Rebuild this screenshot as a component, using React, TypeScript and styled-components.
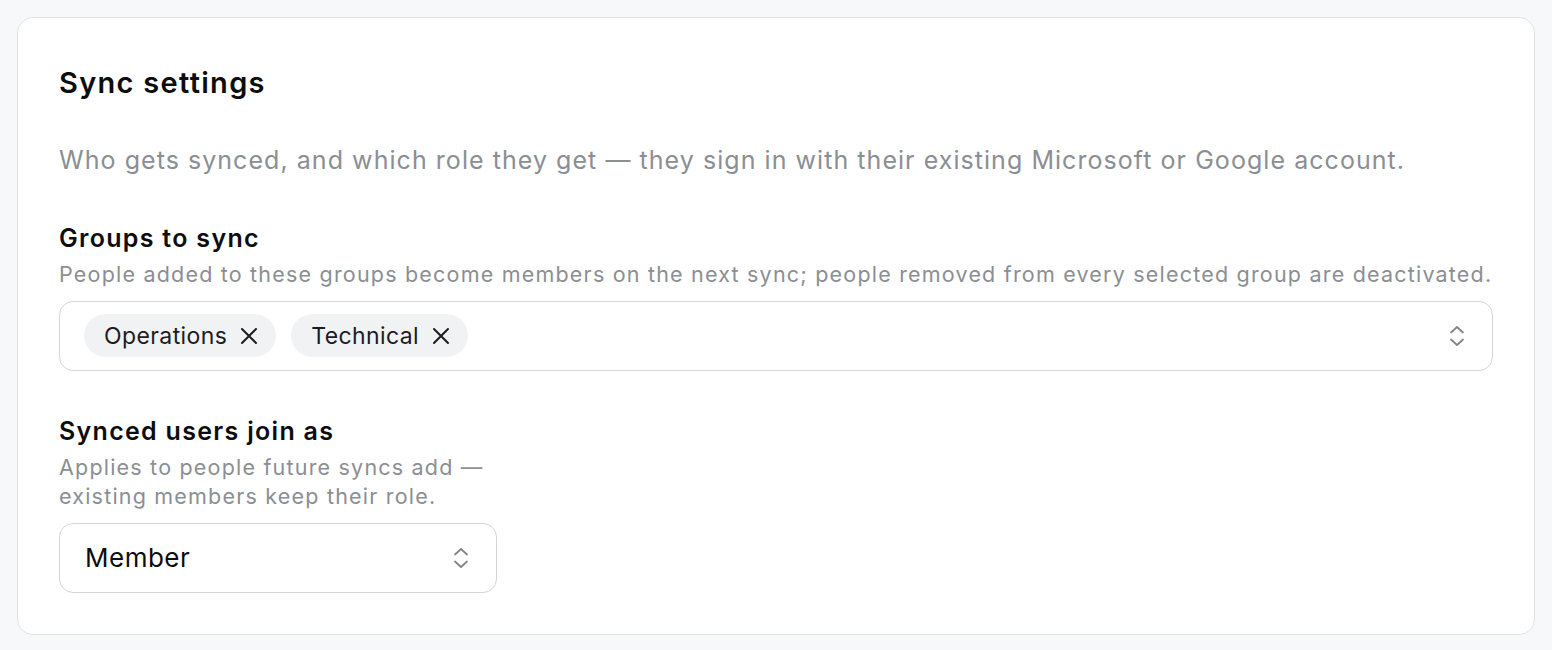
import React from 'react'
import styled, { createGlobalStyle } from 'styled-components'

const GlobalStyle = createGlobalStyle`
  html, body {
    margin: 0;
    padding: 0;
    background: #f7f8fa;
    font-family: Inter, "Noto Sans", "Liberation Sans", sans-serif;
    color: #111;
    -webkit-font-smoothing: antialiased;
  }
`

const Chevrons = () => (
	<svg width='16' height='22' viewBox='0 0 16 22' fill='none' stroke='#808388' strokeWidth='1.7' strokeLinecap='round' strokeLinejoin='round'>
		<path d='M2 7.5 L8 2 L14 7.5'/>
		<path d='M2 14.5 L8 20 L14 14.5'/>
	</svg>
)

const Cross = () => (
	<svg width='18' height='18' viewBox='0 0 18 18' fill='none' stroke='#1c1c1e' strokeWidth='2' strokeLinecap='round'>
		<path d='M2 2 L16 16 M16 2 L2 16'/>
	</svg>
)

const groups = ['Operations', 'Technical']

const App = () => {
	return (
		<Page>
			<GlobalStyle/>
			<Card>
				<Title>Sync settings</Title>
				<Lead>Who gets synced, and which role they get — they sign in with their existing Microsoft or Google account.</Lead>

				<Field>
					<Label>Groups to sync</Label>
					<Help>People added to these groups become members on the next sync; people removed from every selected group are deactivated.</Help>
					<MultiSelect>
						<Chips>
							{ groups.map(g => (
								<Chip key={ g }>
									{ g }
									<RemoveBtn aria-label={ 'Remove ' + g }><Cross/></RemoveBtn>
								</Chip>
							)) }
						</Chips>
						<Chevrons/>
					</MultiSelect>
				</Field>

				<Field $narrow>
					<Label>Synced users join as</Label>
					<Help>Applies to people future syncs add — existing members keep their role.</Help>
					<Select>
						<SelectValue>Member</SelectValue>
						<Chevrons/>
					</Select>
				</Field>
			</Card>
		</Page>
	)
}

export default App

const Page = styled.main`
  padding: 17px 17px 15px;
`

const Card = styled.section`
  background: #fff;
  border: 1px solid #e1e3e6;
  border-radius: 16px;
  padding: 41px 41px 41px;
  display: flex;
  flex-direction: column;
`

const Title = styled.h2`
  margin: 0;
  font-size: 29px;
  line-height: 48px;
  font-weight: 600;
  letter-spacing: 1.3px;
  color: #0d0d0f;
`

const Lead = styled.p`
  margin: 35px 0 0;
  font-size: 25px;
  line-height: 36px;
  letter-spacing: 1.05px;
  color: #8b8e93;
`

const Field = styled.div<{ $narrow?: boolean }>`
  display: flex;
  flex-direction: column;
  margin-top: 43px;
  width: ${ p => p.$narrow ? '438px' : 'auto' };
`

const Label = styled.label`
  font-size: 25px;
  line-height: 34px;
  font-weight: 600;
  letter-spacing: 1.3px;
  color: #0d0d0f;
`

const Help = styled.p`
  margin: 5px 0 0;
  font-size: 21.5px;
  line-height: 29.5px;
  letter-spacing: 1.2px;
  color: #8b8e93;
`

const MultiSelect = styled.div`
  margin-top: 11px;
  height: 70px;
  box-sizing: border-box;
  border: 1px solid #d3d5d9;
  border-radius: 14px;
  padding: 0 27px 0 24px;
  display: flex;
  align-items: center;
  justify-content: space-between;
`

const Chips = styled.div`
  display: flex;
  gap: 15px;
`

const Chip = styled.span`
  display: inline-flex;
  align-items: center;
  gap: 13px;
  height: 43px;
  padding: 0 18px 0 20px;
  border-radius: 22px;
  background: #f1f2f4;
  font-size: 23px;
  letter-spacing: 0.4px;
  color: #1c1c1e;
`

const RemoveBtn = styled.button`
  border: 0;
  background: none;
  padding: 0;
  display: flex;
  cursor: pointer;
`

const Select = styled.div`
  margin-top: 11px;
  height: 70px;
  box-sizing: border-box;
  border: 1px solid #d3d5d9;
  border-radius: 14px;
  padding: 0 27px 0 25px;
  display: flex;
  align-items: center;
  justify-content: space-between;
`

const SelectValue = styled.span`
  font-size: 26px;
  letter-spacing: 0.5px;
  color: #0d0d0f;
`
